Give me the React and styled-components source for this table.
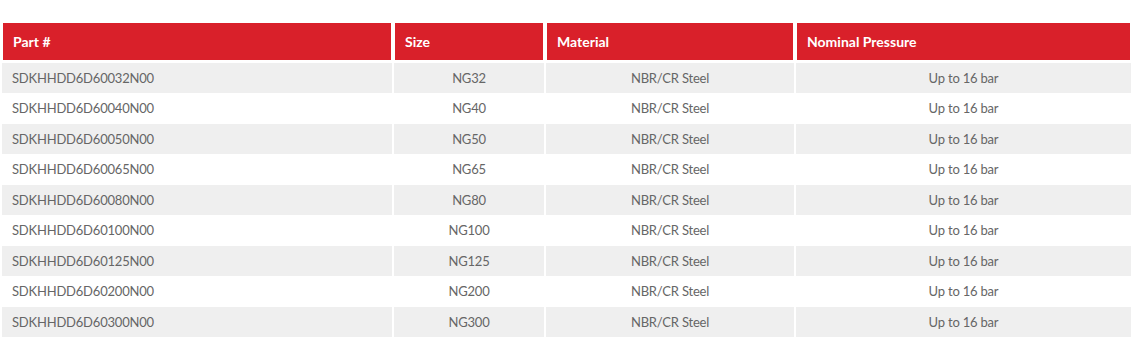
import React from "react";
import styled, { createGlobalStyle } from "styled-components";

const GlobalStyle = createGlobalStyle`
  body {
    margin: 0;
    background: #fff;
    font-family: "Lato", "Open Sans", sans-serif;
  }
`;

const rows = [
  ["SDKHHDD6D60032N00", "NG32"],
  ["SDKHHDD6D60040N00", "NG40"],
  ["SDKHHDD6D60050N00", "NG50"],
  ["SDKHHDD6D60065N00", "NG65"],
  ["SDKHHDD6D60080N00", "NG80"],
  ["SDKHHDD6D60100N00", "NG100"],
  ["SDKHHDD6D60125N00", "NG125"],
  ["SDKHHDD6D60200N00", "NG200"],
  ["SDKHHDD6D60300N00", "NG300"],
];

const Table = styled.table`
  width: 1133px;
  margin-top: 22px;
  border-collapse: separate;
  border-spacing: 2px 0;
  table-layout: fixed;
`;

const HeadCell = styled.th`
  background: #d9202a;
  color: #fff;
  font-size: 14px;
  font-weight: 700;
  text-align: left;
  line-height: 17px;
  padding: 10px 10px;
  border: 1px solid #fff;
  border-bottom-width: 3px;
`;

const Row = styled.tr`
  background: ${(p) => (p.$striped ? "#efefef" : "#fff")};
`;

const Cell = styled.td`
  color: #666;
  font-size: 13px;
  letter-spacing: -0.2px;
  line-height: 18.45px;
  padding: 6px 10px;
  text-align: ${(p) => (p.$center ? "center" : "left")};
  white-space: nowrap;
`;

const App = () => (
  <>
    <GlobalStyle />
    <Table>
      <colgroup>
        <col style={{ width: 390 }} />
        <col style={{ width: 150 }} />
        <col style={{ width: 248 }} />
        <col style={{ width: 335 }} />
      </colgroup>
      <thead>
        <tr>
          <HeadCell>Part #</HeadCell>
          <HeadCell>Size</HeadCell>
          <HeadCell>Material</HeadCell>
          <HeadCell>Nominal Pressure</HeadCell>
        </tr>
      </thead>
      <tbody>
        {rows.map(([part, size], i) => (
          <Row key={part} $striped={i % 2 === 0}>
            <Cell>{part}</Cell>
            <Cell $center>{size}</Cell>
            <Cell $center>NBR/CR Steel</Cell>
            <Cell $center>Up to 16 bar</Cell>
          </Row>
        ))}
      </tbody>
    </Table>
  </>
);

export default App;
